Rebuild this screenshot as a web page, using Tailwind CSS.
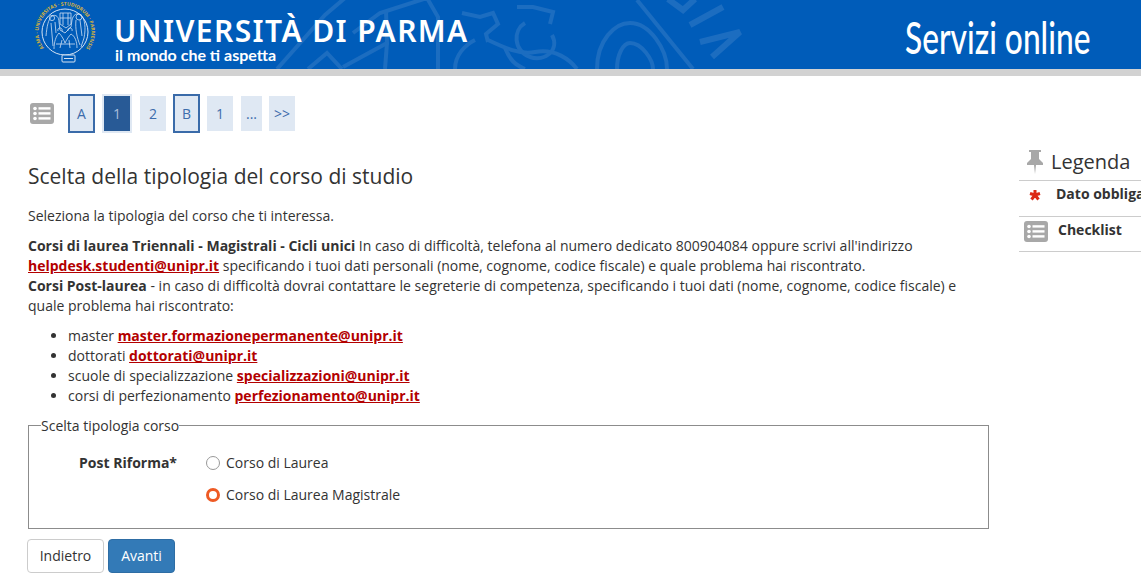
<!DOCTYPE html>
<html lang="it">
<head>
<meta charset="utf-8">
<title>Servizi online</title>
<script src="https://cdn.jsdelivr.net/npm/@tailwindcss/browser@4"></script>
</head>
<body class="bg-white text-[#333] text-[14px] leading-[20px] font-['Open_Sans',sans-serif] overflow-hidden">

<!-- testata -->
<header class="relative h-[76px] bg-[#005cb9] border-b-[7px] border-[#d2d2d2] overflow-hidden">
    <svg class="absolute left-[230px] top-0" width="520" height="69" fill="none" stroke="#1c6dc0" stroke-width="4">
        <path d="M47 69 L95 15 L115 -2"/>
        <path d="M78 69 L97 53 L112 69"/>
        <path d="M113 67 L157 43 L156 10"/>
        <path d="M157 43 L155 69"/>
        <path d="M123 33 L150 13 L197 -2 L208 17 L208 69"/>
        <path d="M225 69 C225 55 235 45 245 40"/>
        <path d="M232 13 L250 17 L263 13 L268 24 L256 34 L258 42"/>
        <path d="M287 7 L303 7 L323 12 L320 24"/>
        <path d="M295 23 C283 30 283 50 300 57 C315 62 330 50 322 35"/>
        <path d="M258 40 C275 48 290 55 305 52 C325 48 340 60 347 69"/>
        <path d="M275 48 C280 60 285 65 295 69"/>
        <path d="M367 69 C367 40 385 23 400 23 C420 23 437 50 437 69"/>
        <path d="M387 69 C387 55 393 43 400 43 C412 43 423 60 423 69"/>
        <path d="M407 0 L463 69"/>
        <path d="M438 -1 L453 10 L465 -1" stroke-width="6"/>
        <path d="M460 25 L493 7 M470 42 L510 32 L482 57" stroke-width="6"/>
    </svg>
    <div class="relative flex items-start h-full">
        <svg class="ml-[34px] shrink-0" width="62" height="69" viewBox="0 0 62 69" fill="none">
            <defs><path id="anello" d="M10 48 A26.4 26.4 0 1 1 52 48"/></defs>
            <circle cx="31" cy="32" r="23" stroke="#d5e3f3" stroke-width="1"/>
            <text fill="#d9b43a" font-size="5" font-weight="700" font-family="Open Sans" textLength="117"><textPath href="#anello" textLength="117">ALMA · UNIVERSITAS · STUDIORUM · PARMENSIS</textPath></text>
            <g stroke="#cfe0f2" stroke-width="0.8">
                <path d="M12 36 C13 26 14 20 18 16 C22 14 25 17 25 22 L26 30 L31 33 L37 27 L38 20 C39 15 43 12 47 15 C51 19 52 28 50 38 L47 47"/>
                <path d="M17 23 L19 46 M21 22 L22 33 M42 20 C41 28 43 38 46 45 M46 20 L48 36"/>
                <path d="M26 13 H37 V24 L32 28 L26 24 Z M26 18 H37 M29 13 V25 M34 13 V25"/>
                <path d="M20 49 C20 42 22 36 25 33 C28 36 30 40 31 43 C33 39 35 36 37 34 C41 36 43 42 43 48 M26 48 L28 40 M36 48 L35 40 M22 44 H41"/>
                <circle cx="18" cy="18" r="2.6"/><circle cx="45" cy="17" r="3"/>
                <path d="M24 31 a2.2 2.2 0 1 1 4 0 M34 31 a2.2 2.2 0 1 1 4 0"/>
            </g>
            <rect x="28" y="55" width="13" height="7" rx="1" fill="#005cb9" stroke="#d5e3f3"/>
            <path d="M30 58.5 H39" stroke="#d5e3f3"/>
        </svg>
        <div class="ml-[18px] text-white font-['Noto_Sans',sans-serif]">
            <div class="mt-[15px] h-[30px] text-[30px] leading-[32px] font-semibold tracking-[1.4px] whitespace-nowrap">UNIVERSITÀ DI PARMA</div>
            <div class="ml-[1px] text-[16px] leading-[20px] font-bold font-['Lato',sans-serif]">il mondo che ti aspetta</div>
        </div>
        <div class="ml-auto mr-[51px] mt-[12px] text-white font-['Lato',sans-serif] text-[44px] leading-[50px] font-medium scale-x-[0.72] origin-right whitespace-nowrap">Servizi online</div>
    </div>
</header>

<div class="flex">
    <main class="w-[989px] shrink-0 pl-[28px]">
        <!-- percorso -->
        <nav class="flex items-center h-[57px] pt-[18px] text-[#3d6cab]">
            <svg class="ml-[2px] mr-[14px]" width="24" height="21" viewBox="0 0 24 21">
                <rect width="24" height="21" rx="3" fill="#a8a8a8"/>
                <g fill="#fff"><circle cx="5" cy="5.5" r="1.8"/><circle cx="5" cy="10.5" r="1.8"/><circle cx="5" cy="15.5" r="1.8"/><rect x="8.5" y="4.2" width="12" height="2.4"/><rect x="8.5" y="9.2" width="12" height="2.4"/><rect x="8.5" y="14.2" width="12" height="2.4"/></g>
            </svg>
            <span class="flex items-center justify-center w-[27px] h-[39px] bg-[#dfe8f3] border-2 border-[#3a6ba9]">A</span>
            <span class="ml-[7px] flex items-center justify-center w-[30px] h-[39px] bg-[#285a96] border-2 border-[#dfe8f3] text-[#a9bfdc]">1</span>
            <span class="ml-[8px] flex items-center justify-center w-[26px] h-[35px] bg-[#dfe8f3]">2</span>
            <span class="ml-[7px] flex items-center justify-center w-[27px] h-[39px] bg-[#dfe8f3] border-2 border-[#3a6ba9]">B</span>
            <span class="ml-[7px] flex items-center justify-center w-[26px] h-[35px] bg-[#dfe8f3]">1</span>
            <span class="ml-[8px] flex items-center justify-center w-[21px] h-[35px] bg-[#dfe8f3]">...</span>
            <span class="ml-[7px] flex items-center justify-center w-[26px] h-[35px] bg-[#dfe8f3]">&gt;&gt;</span>
        </nav>

        <h1 class="mt-[29px] text-[21px] leading-[28px]">Scelta della tipologia del corso di studio</h1>

        <p class="mt-[16px]">Seleziona la tipologia del corso che ti interessa.</p>
        <p class="mt-[10px]"><b>Corsi di laurea Triennali - Magistrali - Cicli unici</b> In caso di difficoltà, telefona al numero dedicato 800904084 oppure scrivi all'indirizzo <a href="#" class="font-bold text-[#b30000] underline">helpdesk.studenti@unipr.it</a> specificando i tuoi dati personali (nome, cognome, codice fiscale) e quale problema hai riscontrato.<br><b>Corsi Post-laurea</b> - in caso di difficoltà dovrai contattare le segreterie di competenza, specificando i tuoi dati (nome, cognome, codice fiscale) e quale problema hai riscontrato:</p>
        <ul class="mt-[10px] ml-[40px] list-disc">
            <li>master <a href="#" class="font-bold text-[#b30000] underline">master.formazionepermanente@unipr.it</a></li>
            <li>dottorati <a href="#" class="font-bold text-[#b30000] underline">dottorati@unipr.it</a></li>
            <li>scuole di specializzazione <a href="#" class="font-bold text-[#b30000] underline">specializzazioni@unipr.it</a></li>
            <li>corsi di perfezionamento <a href="#" class="font-bold text-[#b30000] underline">perfezionamento@unipr.it</a></li>
        </ul>

        <fieldset class="mt-[8px] h-[115px] border border-[#8c8c8c] pl-[12px]">
            <legend class="pt-[2px] text-[14px] leading-[20px]">Scelta tipologia corso</legend>
            <div class="flex mt-[17px]">
                <b class="w-[136px] text-right">Post Riforma*</b>
                <div class="ml-[29px]">
                    <label class="flex items-center h-[20px]"><span class="w-[14px] h-[14px] rounded-full bg-white border border-[#999]"></span><span class="ml-[6px]">Corso di Laurea</span></label>
                    <label class="flex items-center h-[20px] mt-[12px]"><span class="w-[14px] h-[14px] rounded-full bg-white border-[3px] border-[#ee5a24]"></span><span class="ml-[6px]">Corso di Laurea Magistrale</span></label>
                </div>
            </div>
        </fieldset>

        <div class="flex mt-[10px] -ml-[1px] gap-[4px]">
            <button class="w-[77px] h-[34px] rounded-[4px] bg-white border border-[#ccc]">Indietro</button>
            <button class="w-[67px] h-[34px] rounded-[4px] bg-[#337ab7] border border-[#2e6da4] text-white">Avanti</button>
        </div>
    </main>

    <!-- legenda -->
    <aside class="ml-[30px] w-[200px] shrink-0 whitespace-nowrap">
        <div class="flex items-center h-[29px] mt-[71px] ml-[7px]">
            <svg width="18" height="25" viewBox="0 0 18 25" fill="#a8a8a8"><path d="M3 1h12v2h-2v7l4 4v2h-7l-1 9-1-9H1v-2l4-4V3H3z"/></svg>
            <span class="ml-[7px] text-[20px] leading-[28px]">Legenda</span>
        </div>
        <div class="flex h-[36px] mt-[4px] border-t border-[#ccc]">
            <svg class="ml-[10px] mt-[8px] shrink-0" width="12" height="12" viewBox="0 0 12 12" stroke="#dc2a16" stroke-width="3" fill="#dc2a16"><path d="M6 1V6 M6 6L11 4.5 M6 6L9.5 10.5 M6 6L2.5 10.5 M6 6L1 4.5"/><circle cx="6" cy="6" r="1.5" stroke="none"/></svg>
            <b class="ml-[15px] mt-[3px]">Dato obbligatorio</b>
        </div>
        <div class="flex h-[34px] border-t border-b border-[#ccc] box-content">
            <svg class="ml-[5px] mt-[4px]" width="24" height="21" viewBox="0 0 24 21">
                <rect width="24" height="21" rx="3" fill="#a8a8a8"/>
                <g fill="#fff"><circle cx="5" cy="5.5" r="1.8"/><circle cx="5" cy="10.5" r="1.8"/><circle cx="5" cy="15.5" r="1.8"/><rect x="8.5" y="4.2" width="12" height="2.4"/><rect x="8.5" y="9.2" width="12" height="2.4"/><rect x="8.5" y="14.2" width="12" height="2.4"/></g>
            </svg>
            <b class="ml-[10px] mt-[3px]">Checklist</b>
        </div>
    </aside>
</div>
</body>
</html>
